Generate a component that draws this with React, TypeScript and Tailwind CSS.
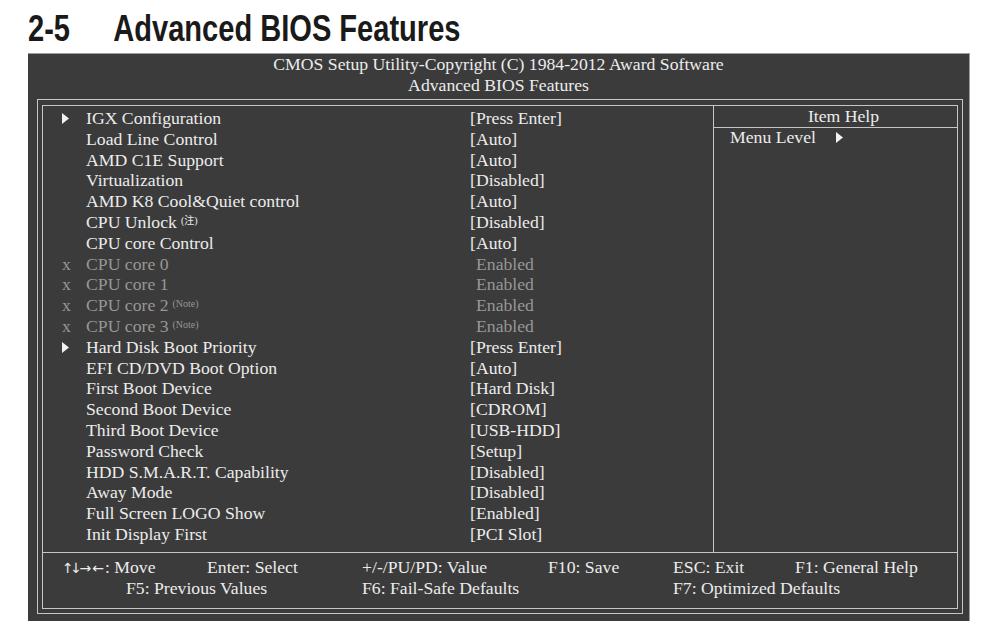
type Row = {
  label: string;
  value: string;
  mark?: 'arrow' | 'x';
  sup?: string;
  off?: boolean;
};

const rows: Row[] = [
  { mark: 'arrow', label: 'IGX Configuration', value: '[Press Enter]' },
  { label: 'Load Line Control', value: '[Auto]' },
  { label: 'AMD C1E Support', value: '[Auto]' },
  { label: 'Virtualization', value: '[Disabled]' },
  { label: 'AMD K8 Cool&Quiet control', value: '[Auto]' },
  { label: 'CPU Unlock', sup: '(注)', value: '[Disabled]' },
  { label: 'CPU core Control', value: '[Auto]' },
  { mark: 'x', label: 'CPU core 0', value: 'Enabled', off: true },
  { mark: 'x', label: 'CPU core 1', value: 'Enabled', off: true },
  { mark: 'x', label: 'CPU core 2', sup: '(Note)', value: 'Enabled', off: true },
  { mark: 'x', label: 'CPU core 3', sup: '(Note)', value: 'Enabled', off: true },
  { mark: 'arrow', label: 'Hard Disk Boot Priority', value: '[Press Enter]' },
  { label: 'EFI CD/DVD Boot Option', value: '[Auto]' },
  { label: 'First Boot Device', value: '[Hard Disk]' },
  { label: 'Second Boot Device', value: '[CDROM]' },
  { label: 'Third Boot Device', value: '[USB-HDD]' },
  { label: 'Password Check', value: '[Setup]' },
  { label: 'HDD S.M.A.R.T. Capability', value: '[Disabled]' },
  { label: 'Away Mode', value: '[Disabled]' },
  { label: 'Full Screen LOGO Show', value: '[Enabled]' },
  { label: 'Init Display First', value: '[PCI Slot]' },
];

function Pointer() {
  return (
    <svg width="7" height="11" viewBox="0 0 7 11" className="inline-block">
      <polygon points="0,0 7,5.5 0,11" fill="#f2f2f2" />
    </svg>
  );
}

function SetupRow({ row }: { row: Row }) {
  const tone = row.off ? 'text-[#979797]' : 'text-[#ececec]';
  return (
    <div className={`flex h-[20.8px] items-center leading-[20.8px] ${tone}`}>
      <span className="flex w-[24px] items-center">
        {row.mark === 'arrow' && <Pointer />}
        {row.mark === 'x' && 'x'}
      </span>
      <span className="w-[384px] whitespace-nowrap">
        {row.label}
        {row.sup && (
          <sup className="relative -top-[4px] ml-[4px] text-[10px] font-['Liberation_Serif','Noto_Sans_CJK_SC',serif]">
            {row.sup}
          </sup>
        )}
      </span>
      <span className={`whitespace-nowrap ${row.off ? 'pl-[6px]' : ''}`}>{row.value}</span>
    </div>
  );
}

export default function App() {
  return (
    <div className="h-[631px] w-[1000px] overflow-hidden bg-white">
      <div className="h-[53px] pl-[28px] pt-[10px]">
        <h1 className="origin-left scale-x-[0.775] whitespace-nowrap font-['Liberation_Sans',Arial,sans-serif] text-[37.5px] font-bold leading-[37.5px] text-[#1a1a1a]">
          <span className="inline-block w-[110px]">2-5</span>
          Advanced BIOS Features
        </h1>
      </div>

      <div className="ml-[28px] h-[568px] w-[942px] border-t border-r border-[#9e9e9e] bg-[#3b3b3b] font-['Liberation_Serif','Times_New_Roman',serif] text-[17.7px] text-[#ececec]">
        <div className="h-[44px] text-center leading-[21px]">
          <div>CMOS Setup Utility-Copyright (C) 1984-2012 Award Software</div>
          <div>Advanced BIOS Features</div>
        </div>

        <div className="ml-[9px] mt-[1px] h-[515px] w-[926px] border border-[#c6c6c6] px-[4px] pb-[4px] pt-[5px]">
          <div className="flex h-full flex-col border border-[#c6c6c6]">
            <div className="flex h-[447px] border-b border-[#c6c6c6]">
              <div className="w-[671px] border-r border-[#c6c6c6] pl-[19px] pt-[2px]">
                {rows.map((row) => (
                  <SetupRow key={row.label} row={row} />
                ))}
              </div>
              <div className="flex-1">
                <div className="h-[22px] border-b border-[#c6c6c6] pl-[16px] text-center leading-[21px]">
                  Item Help
                </div>
                <div className="-mt-[1px] flex items-center pl-[16px] leading-[21px]">
                  <span className="w-[106px]">Menu Level</span>
                  <Pointer />
                </div>
              </div>
            </div>

            <div className="pl-[19px] pt-[4px] leading-[21px]">
              <div className="flex h-[21px] items-center whitespace-nowrap">
                <span className="flex w-[145px] items-center">
                  <span className="flex items-center font-['DejaVu_Sans',sans-serif] text-[14px] leading-none">
                    <span className="tracking-[-3.5px]">↑↓</span>
                    <span className="ml-[1px]">→</span>
                    <span className="ml-[1px]">←</span>
                  </span>
                  <span className="pl-[1px]">: Move</span>
                </span>
                <span className="w-[155px]">Enter: Select</span>
                <span className="w-[186px]">+/-/PU/PD: Value</span>
                <span className="w-[125px]">F10: Save</span>
                <span className="w-[122px]">ESC: Exit</span>
                <span>F1: General Help</span>
              </div>
              <div className="flex whitespace-nowrap pl-[64px]">
                <span className="w-[236px]">F5: Previous Values</span>
                <span className="w-[311px]">F6: Fail-Safe Defaults</span>
                <span>F7: Optimized Defaults</span>
              </div>
            </div>
          </div>
        </div>
      </div>
    </div>
  );
}
